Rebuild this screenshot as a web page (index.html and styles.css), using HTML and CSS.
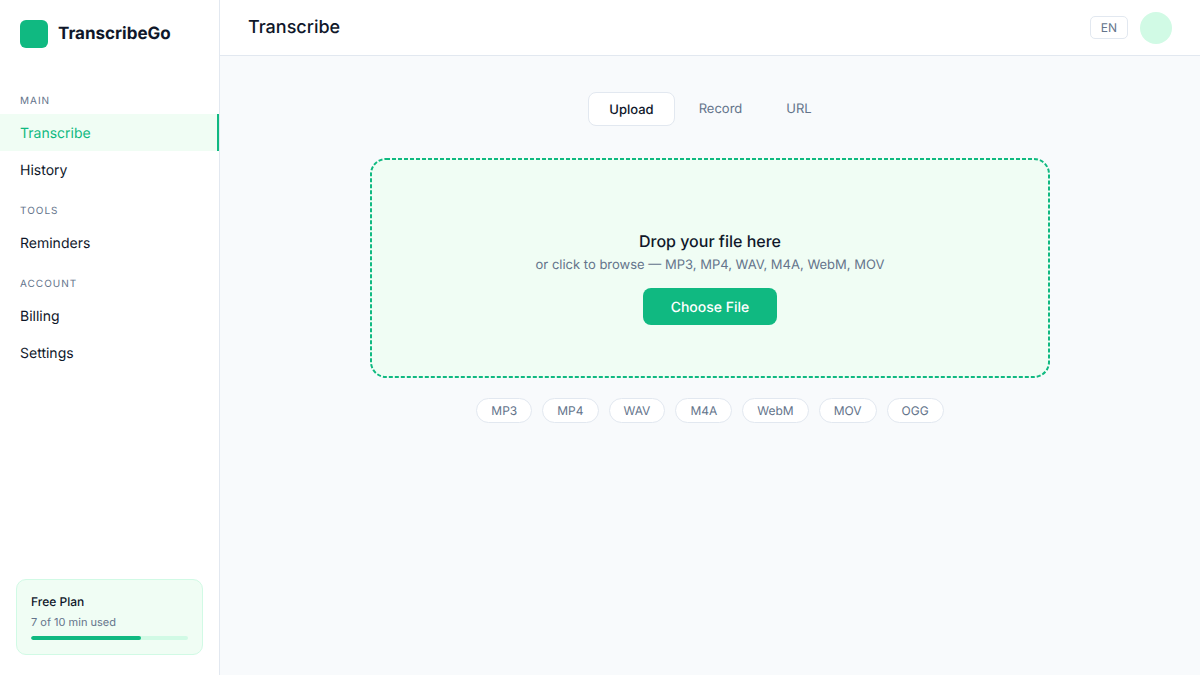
FILE: index.html
```html
<!DOCTYPE html>
<html lang="en">
<head>
    <meta charset="UTF-8">
    <meta name="viewport" content="width=device-width, initial-scale=1.0">
    <title>TranscribeGo</title>
    <link rel="stylesheet" href="styles.css">
</head>
<body>
    <!-- Sidebar -->
    <aside class="sidebar">
        <div class="logo">
            <span class="logo-icon"></span>
            <span class="logo-text">TranscribeGo</span>
        </div>

        <nav class="nav">
            <h2 class="nav-label">MAIN</h2>
            <a href="#transcribe" class="nav-item active" aria-current="page">Transcribe</a>
            <a href="#history" class="nav-item">History</a>

            <h2 class="nav-label">TOOLS</h2>
            <a href="#reminders" class="nav-item">Reminders</a>

            <h2 class="nav-label">ACCOUNT</h2>
            <a href="#billing" class="nav-item">Billing</a>
            <a href="#settings" class="nav-item">Settings</a>
        </nav>

        <div class="plan-card">
            <div class="plan-title">Free Plan</div>
            <label class="plan-usage" for="usage">7 of 10 min used</label>
            <progress class="plan-bar" id="usage" value="7" max="10"></progress>
        </div>
    </aside>

    <div class="main">
        <!-- Top Bar -->
        <header class="topbar">
            <h1>Transcribe</h1>
            <div class="topbar-right">
                <button type="button" class="lang-btn" aria-label="Language: EN">EN</button>
                <button type="button" class="avatar" aria-label="Account"></button>
            </div>
        </header>

        <!-- Upload Section -->
        <main class="content">
            <div class="tabs">
                <button type="button" class="tab active">Upload</button>
                <button type="button" class="tab">Record</button>
                <button type="button" class="tab">URL</button>
            </div>

            <div class="dropzone">
                <svg class="dropzone-outline" aria-hidden="true">
                    <rect x="1" y="1" rx="15" />
                </svg>
                <h3>Drop your file here</h3>
                <p>or click to browse — MP3, MP4, WAV, M4A, WebM, MOV</p>
                <button type="button" class="choose-btn">Choose File</button>
            </div>

            <ul class="formats">
                <li>MP3</li>
                <li>MP4</li>
                <li>WAV</li>
                <li>M4A</li>
                <li>WebM</li>
                <li>MOV</li>
                <li>OGG</li>
            </ul>
        </main>
    </div>

    <script>
        const tabs = document.querySelectorAll('.tab');

        tabs.forEach(tab => {
            tab.addEventListener('click', () => {
                tabs.forEach(t => t.classList.remove('active'));
                tab.classList.add('active');
            });
        });
    </script>
</body>
</html>
```
FILE: styles.css
```css
/* Global Styles */
* {
    margin: 0;
    padding: 0;
    box-sizing: border-box;
}

:root {
    --primary: #10b981;
    --primary-light: #d1fae5;
    --primary-bg: #f0fdf4;
    --bg: #f8fafc;
    --card: #ffffff;
    --border: #e2e8f0;
    --text: #0f172a;
    --muted: #64748b;
}

body {
    display: flex;
    min-height: 100vh;
    font-family: Inter, sans-serif;
    text-rendering: geometricPrecision;
    background: var(--bg);
    color: var(--text);
}

button {
    font-family: inherit;
    text-rendering: inherit;
    border: none;
    cursor: pointer;
}

/* Sidebar */
.sidebar {
    display: flex;
    flex-direction: column;
    flex-shrink: 0;
    width: 220px;
    background: var(--card);
    border-right: 1px solid var(--border);
}

.logo {
    display: flex;
    align-items: center;
    gap: 10px;
    padding: 20px 20px 30px;
}

.logo-icon {
    width: 28px;
    height: 28px;
    border-radius: 6px;
    background: var(--primary);
}

.logo-text {
    font-size: 17px;
    line-height: 23px;
    font-weight: 700;
}

.nav-label {
    padding: 17px 20px 7px;
    font-size: 10px;
    line-height: 12px;
    font-weight: 400;
    letter-spacing: 1px;
    color: var(--muted);
}

.nav-item {
    display: block;
    padding: 11px 20px 9px;
    font-size: 14px;
    line-height: 17px;
    color: var(--text);
    text-decoration: none;
}

.nav-item:hover {
    background: var(--bg);
}

.nav-item.active {
    background: var(--primary-bg);
    border-right: 2px solid var(--primary);
    color: var(--primary);
}

.plan-card {
    margin: auto 16px 20px;
    padding: 14px;
    border: 1px solid var(--primary-light);
    border-radius: 10px;
    background: var(--primary-bg);
}

.plan-title {
    margin-bottom: 6px;
    font-size: 12px;
    line-height: 15px;
    font-weight: 500;
}

.plan-usage {
    display: block;
    margin-bottom: 6px;
    font-size: 11px;
    line-height: 15px;
    color: var(--muted);
}

.plan-bar {
    display: block;
    width: 100%;
    height: 4px;
    border: none;
    border-radius: 2px;
    overflow: hidden;
    background: var(--primary-light);
    appearance: none;
}

.plan-bar::-webkit-progress-bar {
    background: var(--primary-light);
}

.plan-bar::-webkit-progress-value {
    border-radius: 2px;
    background: var(--primary);
}

.plan-bar::-moz-progress-bar {
    background: var(--primary);
}

/* Top Bar */
.main {
    flex: 1;
    min-width: 0;
}

.topbar {
    display: flex;
    align-items: center;
    justify-content: space-between;
    height: 56px;
    padding: 0 28px;
    background: var(--card);
    border-bottom: 1px solid var(--border);
}

.topbar h1 {
    font-size: 18px;
    line-height: 24px;
    font-weight: 500;
}

.topbar-right {
    display: flex;
    align-items: center;
    gap: 12px;
}

.lang-btn {
    padding: 3px 10px;
    border: 1px solid var(--border);
    border-radius: 5px;
    background: var(--card);
    font-size: 12px;
    line-height: 15px;
    color: var(--muted);
}

.avatar {
    width: 32px;
    height: 32px;
    border-radius: 50%;
    background: var(--primary-light);
}

/* Content */
.content {
    display: flex;
    flex-direction: column;
    align-items: center;
    padding: 36px 28px;
}

.tabs {
    display: flex;
    align-items: flex-start;
    gap: 4px;
    margin-bottom: 32px;
}

.tab {
    padding: 9px 20px 7px;
    border-radius: 8px;
    background: transparent;
    font-size: 13px;
    line-height: 16px;
    color: var(--muted);
}

.tab.active {
    border: 1px solid var(--border);
    background: var(--card);
    font-weight: 500;
    color: var(--text);
}

.dropzone {
    position: relative;
    display: flex;
    flex-direction: column;
    align-items: center;
    width: 100%;
    max-width: 680px;
    padding: 73px 22px 53px;
    border-radius: 16px;
    background: var(--primary-bg);
    text-align: center;
}

/* Short dashes that a dashed border can't do */
.dropzone-outline {
    position: absolute;
    inset: 0;
    width: 100%;
    height: 100%;
    pointer-events: none;
}

.dropzone-outline rect {
    width: calc(100% - 2px);
    height: calc(100% - 2px);
    fill: none;
    stroke: var(--primary);
    stroke-width: 2px;
    stroke-dasharray: 4 2;
}

.dropzone h3 {
    margin-bottom: 6px;
    font-size: 16px;
    line-height: 20px;
    font-weight: 500;
}

.dropzone p {
    margin-bottom: 15px;
    font-size: 13px;
    line-height: 16px;
    color: var(--muted);
}

.choose-btn {
    padding: 11px 28px 9px;
    border-radius: 8px;
    background: var(--primary);
    font-size: 14px;
    line-height: 17px;
    font-weight: 500;
    color: white;
}

.choose-btn:hover {
    background: #059669;
}

.formats {
    display: flex;
    flex-wrap: wrap;
    justify-content: center;
    gap: 10px;
    margin-top: 20px;
    list-style: none;
}

.formats li {
    padding: 4px 14px;
    border: 1px solid var(--border);
    border-radius: 20px;
    background: var(--card);
    font-size: 12px;
    line-height: 15px;
    color: var(--muted);
}
```
